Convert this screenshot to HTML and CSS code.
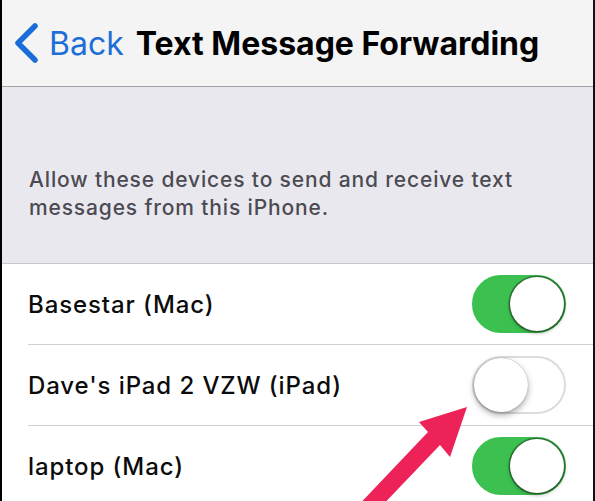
FILE: index.html
```html
<!DOCTYPE html>
<html lang="en">
<head>
<meta charset="UTF-8" />
<meta name="viewport" content="width=device-width, initial-scale=1.0"/>
<title>Text Message Forwarding</title>
<link rel="stylesheet" href="styles.css">
</head>
<body>
<div class="screen">
    <div class="nav-bar">
        <button class="back-btn" aria-label="Back">
            <svg class="chevron" width="26" height="40" viewBox="0 0 26 40">
                <polyline points="22,3 5,20 22,37" fill="none" stroke="#1a6cd9" stroke-width="5.5" stroke-linecap="round" stroke-linejoin="round"/>
            </svg>
            <span>Back</span>
        </button>
        <h1 class="title">Text Message Forwarding</h1>
    </div>

    <div class="group-header">
        <p>Allow these devices to send and receive text messages from this iPhone.</p>
    </div>

    <ul class="device-list">
        <li class="device-row">
            <span class="device-name">Basestar (Mac)</span>
            <span class="switch on"><span class="knob"></span></span>
        </li>
        <li class="device-row">
            <span class="device-name">Dave's iPad 2 VZW (iPad)</span>
            <span class="switch"><span class="knob"></span></span>
        </li>
        <li class="device-row">
            <span class="device-name">laptop (Mac)</span>
            <span class="switch on"><span class="knob"></span></span>
        </li>
    </ul>

    <!-- annotation arrow drawn over the list -->
    <svg class="arrow" width="595" height="501" viewBox="0 0 595 501">
        <polygon points="352,512 428,432 419,422 467,407 450,457 440,445 376,512" fill="#ec2259"/>
    </svg>
</div>
</body>
</html>
```

FILE: styles.css
```css
body, html {
    margin: 0;
    padding: 0;
    width: 100%;
    height: 100%;
    overflow: hidden;
    background: #fff;
    font-family: Inter, "Liberation Sans", sans-serif;
}

.screen {
    position: relative;
    width: 595px;
    height: 501px;
    box-sizing: border-box;
    border-left: 2px solid #000;
    border-right: 2px solid #111;
    overflow: hidden;
}

/* Top navigation */
.nav-bar {
    height: 86px;
    display: flex;
    align-items: center;
    padding-left: 11px;
    background: #f4f4f4;
    border-bottom: 1px solid #a2a2a6;
}

.back-btn {
    display: flex;
    align-items: center;
    gap: 10px;
    background: none;
    border: none;
    padding: 0;
    color: #1d6ed6;
    font-family: inherit;
    font-size: 32px;
    letter-spacing: 0;
    cursor: pointer;
}

.chevron {
    display: block;
}

.title {
    margin: 0 0 0 12px;
    font-size: 32px;
    font-weight: 700;
    color: #000;
    letter-spacing: 0;
}

/* Grey section header */
.group-header {
    height: 177px;
    box-sizing: border-box;
    display: flex;
    align-items: flex-end;
    padding: 0 27px 41px 27px;
    background: #e9e8ef;
    border-bottom: 1px solid #c8c7cc;
}

.group-header p {
    margin: 0;
    font-size: 21px;
    font-weight: 500;
    line-height: 28px;
    color: #4c4b52;
    letter-spacing: 0.85px;
}

/* Device rows */
.device-list {
    list-style: none;
    margin: 0;
    padding: 0 0 0 26px;
    background: #fff;
}

.device-row {
    height: 80px;
    display: flex;
    align-items: center;
    justify-content: space-between;
    padding-right: 27px;
    border-bottom: 1px solid #d0d0d4;
}

.device-name {
    font-size: 24px;
    font-weight: 500;
    color: #0c0c0c;
    letter-spacing: 0.9px;
}

.switch {
    position: relative;
    width: 94px;
    height: 58px;
    box-sizing: border-box;
    border-radius: 29px;
    border: 2px solid #dcdcde;
    background: #fff;
}

.switch .knob {
    position: absolute;
    top: 0;
    left: 0;
    width: 54px;
    height: 54px;
    border-radius: 50%;
    background: #fff;
    box-shadow: 0 3px 6px rgba(0,0,0,0.35), 0 0 1px rgba(0,0,0,0.4);
}

.switch.on {
    background: #3cc150;
    border-color: #3cc150;
}

.switch.on .knob {
    left: auto;
    right: 0;
    box-shadow: 0 2px 4px rgba(0,0,0,0.3), 0 0 0 1.5px rgba(40,90,40,0.7);
}

.arrow {
    position: absolute;
    top: 0;
    left: -2px;
    pointer-events: none;
}
```
